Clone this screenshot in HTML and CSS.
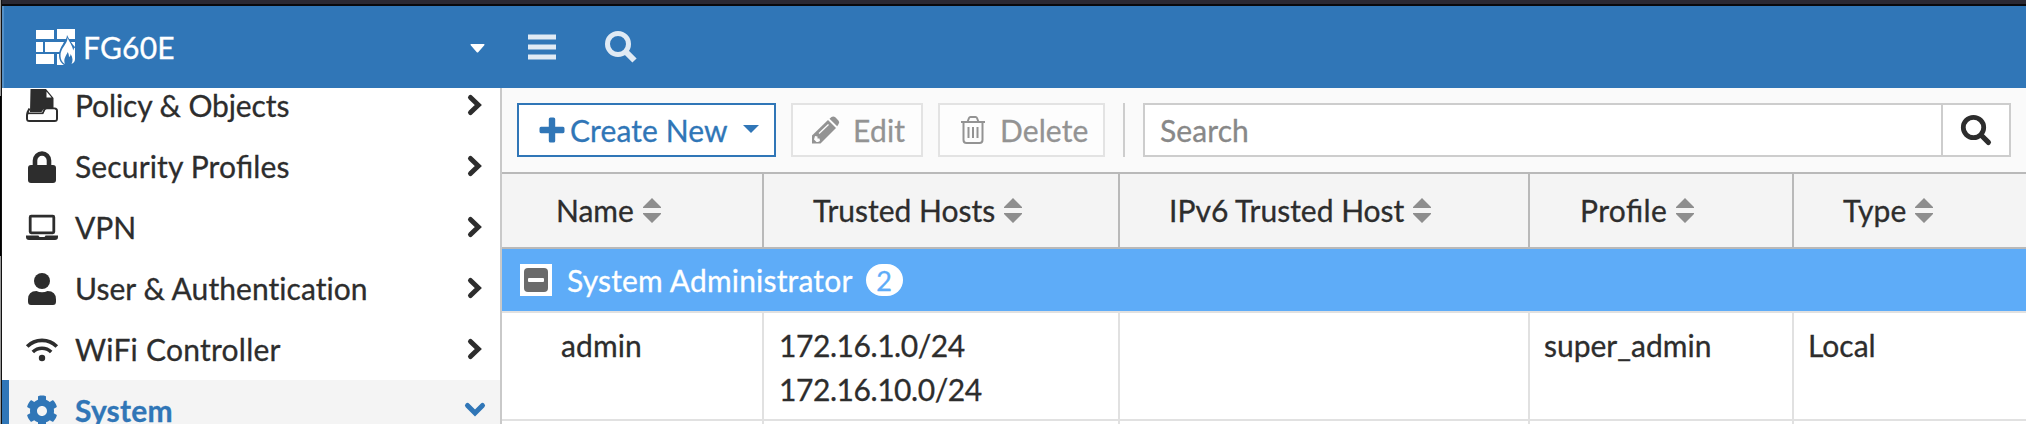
FILE: index.html
```html
<!DOCTYPE html>
<html lang="en">
<head>
<meta charset="utf-8">
<title>FG60E</title>
<link rel="stylesheet" href="styles.css">
</head>
<body>
<div class="window">
  <div class="edge"><span class="edge-mid"></span></div>
  <div class="app">
    <header class="topbar">
      <div class="device">
        <svg class="firewall" viewBox="0 0 39 36" width="39" height="36">
          <g fill="#fff"><rect x="0" y="1" width="18" height="9"/><rect x="21" y="0" width="18" height="10"/><rect x="0" y="13" width="7" height="10"/><path d="M9 13H28L25 23H9Z"/><rect x="0" y="25" width="18" height="10"/><rect x="21" y="25" width="8" height="11"/><path d="M34 13H39V20L35 16Z"/></g>
          <path d="M31 6C31 12 23 17 23 26C23 31 25 34 28 36H37L39 34V18C36 15 33 10 31 6Z" fill="#3076b7"/>
          <path d="M31.500 8.500C32 15 24 19 24.500 27C24.600 31 26.500 33.500 29 35C27 30 30 27 31.800 23C32.500 25 33 26 33 28C34.300 27.500 34.600 26 34.600 25C37 29 37 32 35.500 35C38 34 39 32 39 30V18.500C38 19 37.500 20.500 37.200 21.500C36.500 16 32.500 12 31.500 8.500Z" fill="#fff"/>
        </svg>
        <span class="device-name">FG60E</span>
        <svg class="caret" viewBox="0 0 15 9" width="15" height="9"><path d="M1 0H14Q15 .5 14.300 1.300L8.200 8.200Q7.500 9 6.800 8.200L.7 1.300Q0 .5 1 0Z" fill="#fff"/></svg>
      </div>
      <svg class="menu" viewBox="0 0 28 26" width="28" height="26"><path d="M0 3H28M0 13H28M0 23H28" stroke="#e0eaf4" stroke-width="4.800"/></svg>
      <svg class="find" viewBox="0 0 32 32" width="32" height="32" fill="none" stroke="#e0eaf4"><circle cx="13" cy="13" r="10.500" stroke-width="5"/><path d="M20.500 20.500L29.500 29.500" stroke-width="6"/></svg>
    </header>
    <div class="content">
      <nav class="sidebar">
        <a class="item"><svg class="icon" viewBox="0 0 32 32" width="32" height="32"><path d="M4.500 -1H20L27.500 8V19H20Q18 19 17 20L15.500 22H4Z" fill="#2d2d2d"/><path d="M20.500 1.500L25.500 7.500H20.500Z" fill="#fff"/><path d="M3.500 18.500L1.500 22.500Q1 24 1 25.500V28.500Q1 31 3.500 31H28.500Q31 31 31 28.500V21Q31 18.500 28.500 18.500H21Q19 18.500 18.200 20.500L16.800 23.500H3Q1 23.500 1 25.500" fill="none" stroke="#2d2d2d" stroke-width="2"/><path d="M2 25Q2 24.200 3 24.200H17.300L19 20.800Q19.400 19.500 21 19.500H28.500Q30 19.500 30 21V28.500Q30 30 28.500 30H3.500Q2 30 2 28.500Z" fill="#fff"/></svg><span class="label policy">Policy &amp; Objects</span><svg class="chev" viewBox="0 0 14 20" width="14" height="20"><path d="M2.500 2.500L10.300 10L2.500 17.500"/></svg></a>
        <a class="item"><svg class="icon" viewBox="0 0 32 32" width="32" height="32"><rect x="2" y="14" width="28" height="18" rx="3" fill="#2d2d2d"/><path d="M9 15V9.500A7 7 0 0 1 23 9.500V15" fill="none" stroke="#2d2d2d" stroke-width="4.600"/></svg><span class="label security">Security Profiles</span><svg class="chev" viewBox="0 0 14 20" width="14" height="20"><path d="M2.500 2.500L10.300 10L2.500 17.500"/></svg></a>
        <a class="item"><svg class="icon" viewBox="0 0 32 32" width="32" height="32"><rect x="4.200" y="4.200" width="23.600" height="16.600" rx="1" fill="none" stroke="#2d2d2d" stroke-width="2.800"/><path d="M0 23.500H12.500Q13 25 14 25H18Q19 25 19.500 23.500H32V25Q32 28 29 28H3Q0 28 0 25Z" fill="#2d2d2d"/></svg><span class="label">VPN</span><svg class="chev" viewBox="0 0 14 20" width="14" height="20"><path d="M2.500 2.500L10.300 10L2.500 17.500"/></svg></a>
        <a class="item"><svg class="icon" viewBox="0 0 32 32" width="32" height="32" fill="#2d2d2d"><circle cx="16" cy="8" r="8"/><path d="M2 28.500V26.500Q2 18 10.500 18Q13 19.200 16 19.200T21.500 18Q30 18 30 26.500V28.500Q30 32 27 32H5Q2 32 2 28.500Z"/></svg><span class="label plain">User &amp; Authentication</span><svg class="chev" viewBox="0 0 14 20" width="14" height="20"><path d="M2.500 2.500L10.300 10L2.500 17.500"/></svg></a>
        <a class="item"><svg class="icon" viewBox="0 0 32 32" width="32" height="32" fill="none" stroke="#2d2d2d" stroke-width="3.600"><path d="M1.200 12.500C9 4.300 23 4.300 30.800 12.500M6.800 18C12 13 20 13 25.200 18"/><circle cx="16" cy="24" r="3.200" fill="#2d2d2d" stroke="none"/></svg><span class="label wifi">WiFi Controller</span><svg class="chev" viewBox="0 0 14 20" width="14" height="20"><path d="M2.500 2.500L10.300 10L2.500 17.500"/></svg></a>
        <a class="item active"><svg class="icon" viewBox="0 0 512 512" width="32" height="32"><path fill="#3076b7" d="M487.400 315.700l-42.600-24.600c4.300-23.200 4.300-47 0-70.200l42.600-24.600c4.900-2.800 7.100-8.600 5.500-14-11.100-35.600-30-67.800-54.700-94.600-3.800-4.100-10-5.100-14.800-2.300L380.800 110c-17.900-15.400-38.500-27.300-60.800-35.100V25.800c0-5.600-3.900-10.500-9.400-11.700-36.700-8.200-74.300-7.800-109.200 0-5.500 1.200-9.400 6.100-9.400 11.700V75c-22.200 7.900-42.800 19.800-60.800 35.100L88.700 85.500c-4.900-2.800-11-1.900-14.800 2.300-24.700 26.700-43.600 58.900-54.700 94.600-1.700 5.400.6 11.200 5.500 14L67.300 221c-4.300 23.200-4.300 47 0 70.200l-42.600 24.600c-4.900 2.800-7.100 8.600-5.500 14 11.100 35.600 30 67.800 54.700 94.600 3.800 4.100 10 5.100 14.800 2.300l42.600-24.600c17.900 15.400 38.500 27.300 60.800 35.100v49.200c0 5.600 3.900 10.500 9.400 11.700 36.700 8.200 74.300 7.800 109.200 0 5.500-1.200 9.400-6.100 9.400-11.700v-49.200c22.200-7.900 42.800-19.800 60.800-35.100l42.600 24.600c4.900 2.800 11 1.900 14.800-2.300 24.700-26.700 43.600-58.900 54.700-94.600 1.500-5.500-.7-11.300-5.600-14.100zM256 336c-44.100 0-80-35.900-80-80s35.900-80 80-80 80 35.900 80 80-35.900 80-80 80z"/></svg><span class="label">System</span><svg class="chev down" viewBox="0 0 20 14" width="20" height="14"><path d="M2.500 2.500L10 10L17.500 2.500"/></svg></a>
      </nav>
      <main class="main">
        <div class="toolbar">
          <button class="btn create"><svg viewBox="0 0 26 26" width="26" height="26"><path d="M11.500 .5H14.500Q16.200 .5 16.200 2V9.800H24Q25.500 9.800 25.500 11.500V14.500Q25.500 16.200 24 16.200H16.200V24Q16.200 25.500 14.500 25.500H11.500Q9.800 25.500 9.800 24V16.200H2Q.5 16.200 .5 14.500V11.500Q.5 9.800 2 9.800H9.800V2Q9.800 .5 11.500 .5Z" fill="#3076b7"/></svg><span>Create New</span><svg class="drop" viewBox="0 0 16 8" width="16" height="8"><path d="M0 0H16L8 8Z" fill="#3076b7"/></svg></button>
          <button class="btn edit"><svg viewBox="0 0 28 28" width="28" height="28"><path d="M0 19.500L16 4L24 12L8.500 27.500H0Z" fill="#939393"/><path d="M17.500 2.700L19.500 1Q21.500 -.3 23.600 1.600L26.400 4.400Q28 6.200 26.600 8L25.200 10.300Z" fill="#939393"/><path d="M7 17.500L16.500 8.500" fill="none" stroke="#fdfdfd" stroke-width="1.300"/><path d="M3 20L5.500 20.500V22.500H7.500L8 25L6 26H4.500L2 23.500Z" fill="#fdfdfd"/></svg><span>Edit</span></button>
          <button class="btn delete"><svg viewBox="0 0 26 28" width="26" height="28" fill="none" stroke="#939393" stroke-width="2"><path d="M1 6H25M7.500 6L9 2Q9.400 1 10.500 1H15.500Q16.600 1 17 2L18.500 6M3.500 6V24Q3.500 27 6.500 27H19.500Q22.500 27 22.500 24V6M8.500 11V22M13 11V22M17.500 11V22"/></svg><span>Delete</span></button>
          <span class="divider"></span>
          <div class="search"><span class="placeholder">Search</span><span class="go"><svg viewBox="0 0 30 30" width="30" height="30" fill="none" stroke="#2d2d2d"><circle cx="12.500" cy="12.500" r="10.200" stroke-width="4.800"/><path d="M20.500 20.500L27.400 27.400" stroke-width="5.200" stroke-linecap="round"/></svg></span></div>
        </div>
        <div class="grid head">
          <div class="cell">Name<svg class="sort" viewBox="0 0 18 25" width="18" height="25"><path d="M9 0L18 9V10H0V9ZM9 25L18 16V15H0V16Z"/></svg></div>
          <div class="cell">Trusted Hosts<svg class="sort" viewBox="0 0 18 25" width="18" height="25"><path d="M9 0L18 9V10H0V9ZM9 25L18 16V15H0V16Z"/></svg></div>
          <div class="cell">IPv6 Trusted Host<svg class="sort" viewBox="0 0 18 25" width="18" height="25"><path d="M9 0L18 9V10H0V9ZM9 25L18 16V15H0V16Z"/></svg></div>
          <div class="cell"><span class="profile">Profile</span><svg class="sort" viewBox="0 0 18 25" width="18" height="25"><path d="M9 0L18 9V10H0V9ZM9 25L18 16V15H0V16Z"/></svg></div>
          <div class="cell">Type<svg class="sort" viewBox="0 0 18 25" width="18" height="25"><path d="M9 0L18 9V10H0V9ZM9 25L18 16V15H0V16Z"/></svg></div>
        </div>
        <div class="group"><span class="toggle"><span class="box"><span class="minus"></span></span></span><span class="group-name">System Administrator</span><span class="badge">2</span></div>
        <div class="grid row">
          <div class="cell name">admin</div>
          <div class="cell hosts">172.16.1.0/24<br>172.16.10.0/24</div>
          <div class="cell"></div>
          <div class="cell">super_admin</div>
          <div class="cell">Local</div>
        </div>
        <div class="grid row next"><div class="cell"></div><div class="cell"></div><div class="cell"></div><div class="cell"></div><div class="cell"></div></div>
      </main>
    </div>
  </div>
</div>
</body>
</html>
```
FILE: styles.css
```css
* { box-sizing: border-box; }
body { margin: 0; font-family: Lato, sans-serif; font-size: 30px; color: #2d2d2d; -webkit-text-stroke: 0.3px; }
svg { display: block; flex: none; overflow: visible; }
.window { display: flex; width: 2026px; height: 424px; overflow: hidden; background: #fff; }
.edge { display: flex; width: 2px; background: #999; border-right: 1px solid #111; padding-top: 96px; }
.edge-mid { width: 1px; height: 160px; background: #000; }
.app { flex: 1; min-width: 0; }
.topbar { height: 88px; border-top: 4px solid #2b2933; box-shadow: inset 0 2px #09090d, inset 2px 0 #5590c6; background: #3076b7; display: flex; align-items: center; padding-left: 34px; }
.device { display: flex; align-items: center; width: 449px; color: #fff; }
.firewall { margin-top: 2px; }
.device-name { margin: 2px 0 0 8px; letter-spacing: 0.2px; }
.caret { margin: 5px 0 0 auto; }
.menu { margin: 2px 0 0 43px; }
.find { margin: 2px 0 0 49px; }
.content { display: flex; height: 336px; overflow: hidden; }
.sidebar { width: 500px; border-right: 2px solid #c9c9c9; height: 380px; margin-top: -13px; }
.item { display: flex; align-items: center; height: 61px; padding: 0 18px 0 24px; }
.label { margin: -2px 0 0 17px; }
.policy { letter-spacing: -0.1px; }
.security { letter-spacing: 0.15px; font-feature-settings: "liga" 1; }
.plain { font-variant-ligatures: none; letter-spacing: 0.06px; }
.wifi { letter-spacing: 0.25px; }
.chev { margin: -1px 0 0 auto; fill: none; stroke: #2d2d2d; stroke-width: 5; stroke-linecap: round; }
.active { background: #f4f4f4; color: #3076b7; font-weight: 700; border-left: 7px solid #3076b7; padding: 0 15px 0 17px; }
.active .label { letter-spacing: 0.2px; }
.active .chev { stroke: #3076b7; }
.main { flex: 1; min-width: 0; }
.toolbar { display: flex; height: 86px; padding: 15px 15px 0; background: #fafafa; border-bottom: 2px solid #b9b9b9; }
.btn { font: inherit; display: flex; align-items: center; height: 54px; padding: 0; border: 2px solid #e3e3e3; background: #fdfdfd; color: #939393; }
.create { width: 259px; padding-left: 20px; border-color: #3076b7; background: #fff; color: #3076b7; }
.create span { margin-left: 5px; letter-spacing: 0.1px; }
.drop { margin: 0 0 2px 15px; }
.edit { width: 132px; margin-left: 15px; padding-left: 19px; }
.edit span { margin-left: 13px; letter-spacing: 0.2px; }
.delete { width: 167px; margin-left: 15px; padding-left: 20px; }
.delete span { margin-left: 14px; letter-spacing: 0.1px; }
.divider { width: 2px; height: 54px; margin: 0 18px; background: #cdcdcd; }
.search { flex: 1; height: 54px; display: flex; border: 2px solid #cdcdcd; background: #fff; color: #888; }
.placeholder { flex: 1; padding-left: 15px; line-height: 50px; letter-spacing: 0.1px; }
.go { width: 68px; border-left: 2px solid #cdcdcd; display: flex; align-items: center; justify-content: center; }
.grid { display: grid; grid-template-columns: 262px 356px 410px 264px 1fr; }
.cell { border-right: 2px solid #e1e1e1; }
.cell:last-child { border-right: 0; }
.head { height: 75px; background: #f4f4f4; border-bottom: 2px solid #b9b9b9; }
.head .cell { border-color: #b9b9b9; display: flex; align-items: center; padding: 0 0 2px 49px; }
.head .cell:first-child { padding-left: 54px; }
.head .cell:nth-child(4) { padding-left: 50px; }
.profile { letter-spacing: 0.4px; font-feature-settings: "liga" 1; }
.sort { margin: 2px 0 0 9px; fill: #8e8e8e; }
.group { height: 64px; display: flex; align-items: center; padding-left: 18px; background: #5eacf8; border-bottom: 2px solid #e1e1e1; color: #fff; }
.toggle { width: 32px; height: 32px; padding: 4px; background: #fff; }
.box { display: flex; align-items: center; justify-content: center; width: 24px; height: 24px; border-radius: 4px; background: #6b6b6b; }
.minus { width: 16px; height: 4px; background: #fff; border-radius: 1px; }
.group-name { margin-left: 15px; letter-spacing: 0.18px; }
.badge { margin-left: 13px; width: 37px; height: 32px; border-radius: 16px; background: #fff; color: #5eacf8; font-size: 27px; line-height: 33px; text-align: center; }
.row { height: 108px; border-bottom: 2px solid #e1e1e1; line-height: 44px; }
.row .cell { padding: 10px 0 0 14px; }
.row .name { padding-left: 59px; letter-spacing: 0.1px; }
.row .hosts { padding-left: 15px; letter-spacing: -0.43px; }
.next { height: 20px; }
```
